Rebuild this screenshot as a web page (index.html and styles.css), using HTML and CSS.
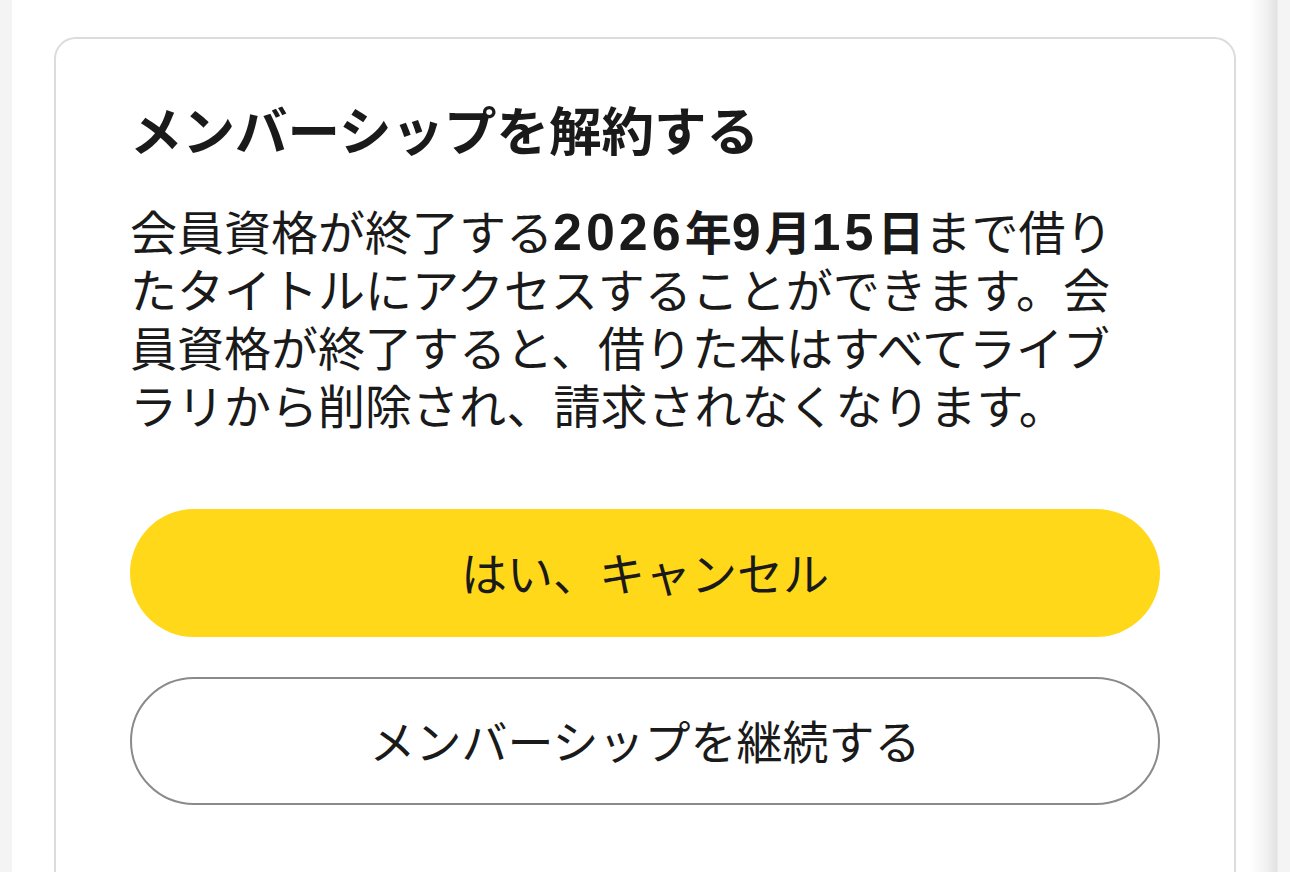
FILE: index.html
```html
<!DOCTYPE html>
<html lang="ja">
<head>
<meta charset="utf-8">
<title>メンバーシップを解約する</title>
<link rel="stylesheet" href="styles.css">
</head>
<body>
<div class="frame">
  <div class="edge-left"></div>
  <main class="main">
    <section class="card">
      <h1 class="title">メンバーシップを解約する</h1>
      <p class="desc">会員資格が終了する<strong><span class="num">2026</span>年<span class="num">9</span>月<span class="num">15</span>日</strong>まで借りたタイトルにアクセスすることができます。会員資格が終了すると、借りた本はすべてライブラリから削除され、請求されなくなります。</p>
      <div class="actions">
        <button class="btn btn-primary">はい、キャンセル</button>
        <button class="btn btn-outline">メンバーシップを継続する</button>
      </div>
    </section>
  </main>
  <div class="edge-right"></div>
</div>
</body>
</html>
```

FILE: styles.css
```css
html, body {
  margin: 0;
  padding: 0;
  background: #ffffff;
}
body {
  font-family: "Noto Sans CJK JP", "Noto Sans", sans-serif;
  color: #1a1a1a;
  overflow: hidden;
}
.frame {
  display: flex;
  width: 1290px;
  height: 872px;
}
.edge-left {
  width: 12px;
  flex: none;
  background: #f4f4f4;
}
.main {
  width: 1238px;
  flex: none;
  padding: 37px 14px 0 42px;
  box-sizing: border-box;
}
.edge-right {
  flex: 1;
  background: linear-gradient(to right, #ffffff 0px, #f2f2f2 16px, #e2e2e2 27px, #f4f4f4 28px, #f4f4f4 100%);
}
.card {
  border: 2px solid #dcdcdc;
  border-radius: 22px;
  padding: 54px 74px 62px 74px;
  box-sizing: border-box;
  height: 860px;
}
.title {
  margin: 0;
  font-size: 52.5px;
  font-weight: 700;
  line-height: 70px;
  letter-spacing: 0;
}
.desc {
  margin: 38px 0 0 0;
  width: 990px;
  font-size: 47px;
  line-height: 58px;
  font-weight: 400;
}
.desc strong {
  font-weight: 700;
}
.num {
  font-family: "Liberation Sans", Arial, sans-serif;
  font-size: 52px;
  letter-spacing: 4px;
  line-height: 1;
}
.actions {
  margin-top: 76px;
  display: flex;
  flex-direction: column;
  gap: 40px;
}
.btn {
  display: block;
  width: 100%;
  height: 128px;
  border-radius: 64px;
  font-family: "Noto Sans CJK JP", "Noto Sans", sans-serif;
  font-size: 46px;
  line-height: 1;
  color: #1a1a1a;
  padding: 0 0 4px 0;
  box-sizing: border-box;
}
.btn-primary {
  background: #ffd81a;
  border: none;
}
.btn-outline {
  background: #ffffff;
  border: 2px solid #8a8a8a;
}
```
